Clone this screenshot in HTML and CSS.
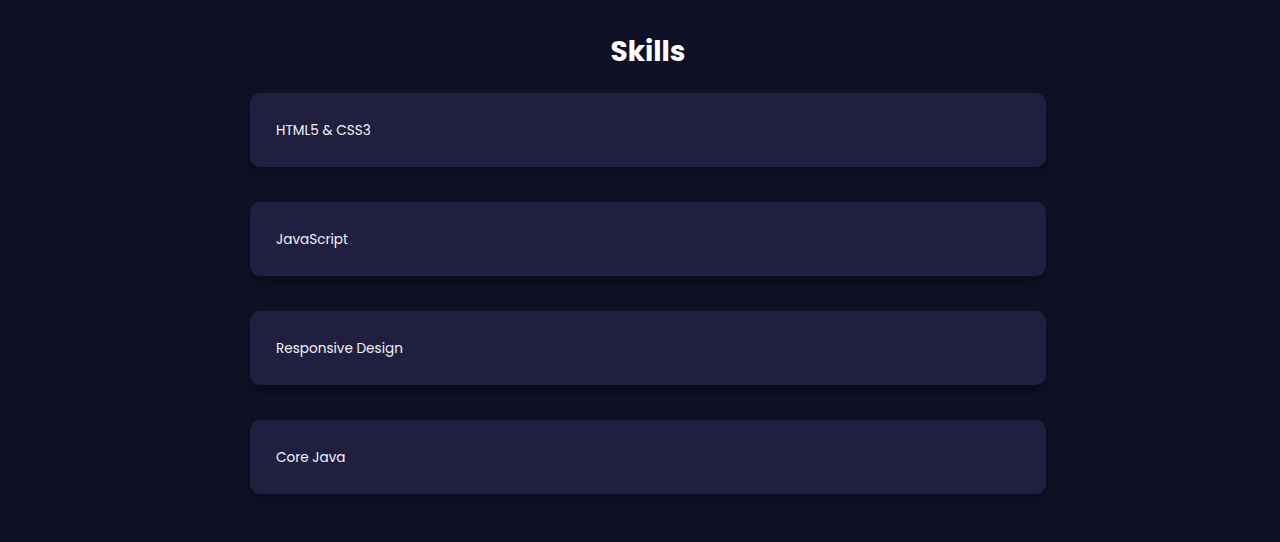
FILE: index.html
```html
<!DOCTYPE html>
<html lang="en">
<head>
<meta charset="utf-8">
<title>Skills</title>
<link rel="stylesheet" href="styles.css">
</head>
<body>
<section class="skills">
  <h2 class="skills-title">Skills</h2>
  <div class="skill-list">
    <div class="skill-card">HTML5 &amp; CSS3</div>
    <div class="skill-card">JavaScript</div>
    <div class="skill-card">Responsive Design</div>
    <div class="skill-card">Core Java</div>
  </div>
</section>
</body>
</html>
```
FILE: styles.css
```css
html, body {
  margin: 0;
  padding: 0;
  background: #0f1126;
  height: 100%;
}
body {
  font-family: "Poppins", "Inter", "Open Sans", sans-serif;
  color: #ffffff;
}
.skills {
  width: 796px;
  margin-left: 250px;
  padding-top: 33px;
}
.skills-title {
  margin: 0 0 22px 0;
  text-align: center;
  font-size: 28px;
  font-weight: 700;
  line-height: 38px;
}
.skill-list {
  display: flex;
  flex-direction: column;
  gap: 35px;
}
.skill-card {
  height: 74px;
  box-sizing: border-box;
  display: flex;
  align-items: center;
  padding: 2px 26px 0;
  background: #201f3f;
  border-radius: 10px;
  font-size: 13.6px;
  font-weight: 400;
  color: #f2f2f8;
  box-shadow: 0 6px 14px rgba(0, 0, 0, 0.35);
}
```
